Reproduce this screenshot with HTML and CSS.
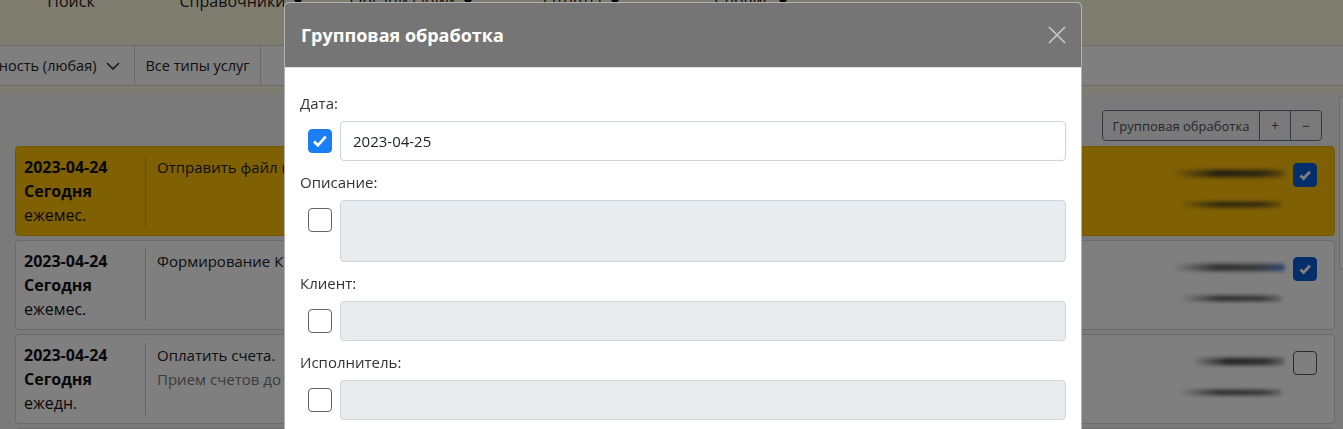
FILE: index.html
```html
<!DOCTYPE html>
<html lang="ru">
<head>
<meta charset="utf-8">
<title>Задачи</title>
<link rel="stylesheet" href="styles.css">
</head>
<body>
<div class="page">
  <nav class="topnav">
    <ul>
      <li>Поиск</li>
      <li class="caret">Справочники</li>
      <li class="caret">Организации</li>
      <li class="caret">Отчеты</li>
      <li class="caret">Сервис</li>
    </ul>
  </nav>
  <div class="filters">
    <div class="filter-bar">
      <div class="filter filter-first">
        <span>Периодичность (любая)</span>
        <svg class="chev" width="14" height="8" viewBox="0 0 14 8"><polyline points="1,1 7,7 13,1" fill="none" stroke="#333" stroke-width="1.6"/></svg>
      </div>
      <div class="filter">Все типы услуг</div>
    </div>
  </div>
  <main class="content">
    <div class="main-col">
      <div class="toolbar">
        <div class="btn-group">
          <button class="btn">Групповая обработка</button>
          <button class="btn btn-sm">+</button>
          <button class="btn btn-sm">−</button>
        </div>
      </div>
      <div class="task warn">
        <div class="task-date"><b>2023-04-24</b><b>Сегодня</b><span>ежемес.</span></div>
        <div class="task-desc">Отправить файл клиенту</div>
        <div class="task-side">
          <div class="blurs"><i class="blur b1"></i><i class="blur b2"></i></div>
          <span class="cb cb-on"><svg viewBox="0 0 24 24"><path d="M7 12.5l3.5 3.3 6.8-7.3" fill="none" stroke="#fff" stroke-width="3"/></svg></span>
        </div>
      </div>
      <div class="task">
        <div class="task-date"><b>2023-04-24</b><b>Сегодня</b><span>ежемес.</span></div>
        <div class="task-desc">Формирование КУДиР</div>
        <div class="task-side">
          <div class="blurs"><i class="blur b1 blue"></i><i class="blur b2"></i></div>
          <span class="cb cb-on"><svg viewBox="0 0 24 24"><path d="M7 12.5l3.5 3.3 6.8-7.3" fill="none" stroke="#fff" stroke-width="3"/></svg></span>
        </div>
      </div>
      <div class="task">
        <div class="task-date"><b>2023-04-24</b><b>Сегодня</b><span>ежедн.</span></div>
        <div class="task-desc">Оплатить счета.<span class="muted">Прием счетов до 12:00</span></div>
        <div class="task-side">
          <div class="blurs"><i class="blur b1 short"></i><i class="blur b2"></i></div>
          <span class="cb"></span>
        </div>
      </div>
      <div class="task">
        <div class="task-date"><b>2023-04-24</b><b>Сегодня</b><span>ежедн.</span></div>
        <div class="task-desc">Проверить почту</div>
        <div class="task-side"><span class="cb"></span></div>
      </div>
    </div>
    <aside class="side-panel"></aside>
  </main>
</div>

<div class="backdrop"></div>

<div class="modal">
  <div class="modal-header">
    <h5 class="modal-title">Групповая обработка</h5>
    <svg class="close" width="18" height="18" viewBox="0 0 18 18"><path d="M1 1L17 17M17 1L1 17" stroke="#c9c9c9" stroke-width="1.6"/></svg>
  </div>
  <div class="modal-body">
    <div class="group">
      <label>Дата:</label>
      <div class="row">
        <span class="mcb mcb-on"><svg viewBox="0 0 24 24"><path d="M5.5 12.5l4.2 4.2 8.5-9.5" fill="none" stroke="#fff" stroke-width="3"/></svg></span>
        <div class="input">2023-04-25</div>
      </div>
    </div>
    <div class="group">
      <label>Описание:</label>
      <div class="row">
        <span class="mcb"></span>
        <div class="input disabled textarea"></div>
      </div>
    </div>
    <div class="group">
      <label>Клиент:</label>
      <div class="row">
        <span class="mcb"></span>
        <div class="input disabled"></div>
      </div>
    </div>
    <div class="group">
      <label>Исполнитель:</label>
      <div class="row">
        <span class="mcb"></span>
        <div class="input disabled"></div>
      </div>
    </div>
  </div>
</div>
</body>
</html>
```

FILE: styles.css
```css
* { box-sizing: border-box; }
html, body { margin: 0; height: 100%; overflow: hidden; }
body {
  font-family: "Open Sans", "Noto Sans", sans-serif;
  color: #212529;
  background: #f5f5f5;
}

.topnav { background: #fffade; height: 45px; display: flow-root; }
.topnav ul {
  list-style: none; display: flex; margin: -10px 0 0 -14px; padding: 0;
}
.topnav li {
  width: 170px; text-align: center; font-size: 16px; line-height: 22px; color: #222;
}
.caret::after {
  content: ""; display: inline-block; margin-left: 9px; vertical-align: middle;
  border-top: 6px solid #000; border-left: 4px solid transparent; border-right: 4px solid transparent;
}

.filters { background: #fffade; height: 48px; }
.filter-bar {
  display: flex; height: 41px; background: #fff;
  border-top: 1px solid #d4d4d4; border-bottom: 1px solid #d4d4d4;
}
.filter {
  display: flex; align-items: center; padding: 0 10px;
  border-right: 1px solid #d4d4d4; font-size: 14.5px; color: #222;
}
.filter-first { margin-left: -83px; gap: 10px; padding-right: 14px; }
.chev { display: block; }

.content { display: flex; padding: 17px 0 0 15px; }
.main-col { width: 1320px; flex: none; }
.side-panel {
  flex: none; margin: -14px 0 0 4px; width: 30px; height: 174px;
  border: 1px solid #d4d4d4; border-radius: 4px; background: #fff;
}
.toolbar { display: flex; justify-content: flex-end; padding-right: 13px; margin-bottom: 5px; }
.btn-group { display: flex; }
.btn {
  font: 13px/28px "Open Sans", sans-serif; color: #495057; background: transparent;
  border: 1px solid #6c757d; padding: 0 9px; margin: 0; height: 31px;
}
.btn:first-child { width: 158px; }
.btn + .btn { margin-left: -1px; }
.btn:first-child { border-radius: 4px 0 0 4px; }
.btn:last-child { border-radius: 0 4px 4px 0; }
.btn-sm { width: 32px; padding: 0; font-size: 14px; }

.task {
  display: flex; align-items: flex-start; height: 90px; padding: 8px;
  background: #fff; border: 1px solid #d4d4d4; border-radius: 4px;
  margin-bottom: 4px; font-size: 16px; line-height: 24px;
}
.task.warn { background: #ffc107; border-color: #e6ad06; }
.task-date {
  width: 122px; display: flex; flex-direction: column; border-right: 1px solid rgba(0,0,0,.2);
  color: #111; font-size: 16px;
}
.task-date b { font-weight: 700; }
.task-desc { flex: 1; padding-left: 11px; display: flex; flex-direction: column; color: #222; font-size: 15px; }
.muted { color: #777; }
.task-side { display: flex; align-items: flex-start; gap: 8px; margin-top: 8px; margin-right: 9px; }
.blurs { width: 112px; position: relative; height: 50px; }
.blur {
  position: absolute; display: block; height: 5px; border-radius: 3px; filter: blur(2px);
  background: linear-gradient(90deg, rgba(60,60,60,0), rgba(40,40,40,.9) 40%, rgba(40,40,40,.8) 80%, rgba(60,60,60,.3));
}
.b1 { top: 7px; left: 0; right: 0; height: 7px; }
.b2 { top: 39px; left: 6px; right: 3px; }
.b1.blue { background: linear-gradient(90deg, rgba(60,60,60,0), rgba(40,40,40,.8) 40%, rgba(40,40,40,.7) 75%, rgba(60,120,220,.9)); }
.b1.short { left: 18px; }
.cb {
  width: 24px; height: 24px; border: 1px solid #555; border-radius: 4px; background: #fff;
  display: block; flex: none;
}
.cb-on { background: #0b5ed7; border-color: #0b5ed7; }
.cb svg, .mcb svg { width: 100%; height: 100%; display: block; }

.backdrop { position: fixed; inset: 0; background: rgba(0,0,0,.5); }

.modal {
  position: fixed; left: 284px; top: 2px; width: 798px; height: 460px;
  background: #fff; border: 1px solid rgba(0,0,0,.3); border-radius: 5px; overflow: hidden;
}
.modal-header {
  height: 65px; background: #757575; border-bottom: 1px solid #dee2e6;
  display: flex; align-items: center; justify-content: space-between; padding: 0 16px;
}
.modal-title { margin: 0; font-size: 18px; font-weight: 700; color: #fff; }
.close { display: block; margin-right: -1px; }
.modal-body { padding: 23px 15px 16px; }
.group label { display: block; font-size: 15px; line-height: 24px; color: #333; margin-bottom: 6px; }
.group .row { display: flex; align-items: flex-start; gap: 8px; margin-bottom: 9px; }
.mcb {
  width: 24px; height: 24px; margin: 8px 0 0 8px; border: 1px solid #666; border-radius: 4px;
  display: block; flex: none; background: #fff;
}
.mcb-on { background: #1a7ef5; border-color: #1a7ef5; }
.input {
  flex: 1; height: 40px; border: 1px solid #ced4da; border-radius: 4px;
  padding: 0 12px; font-size: 15px; line-height: 38px; color: #212529;
}
.input.disabled { background: #e9ecef; }
.input.textarea { height: 62px; }
```
